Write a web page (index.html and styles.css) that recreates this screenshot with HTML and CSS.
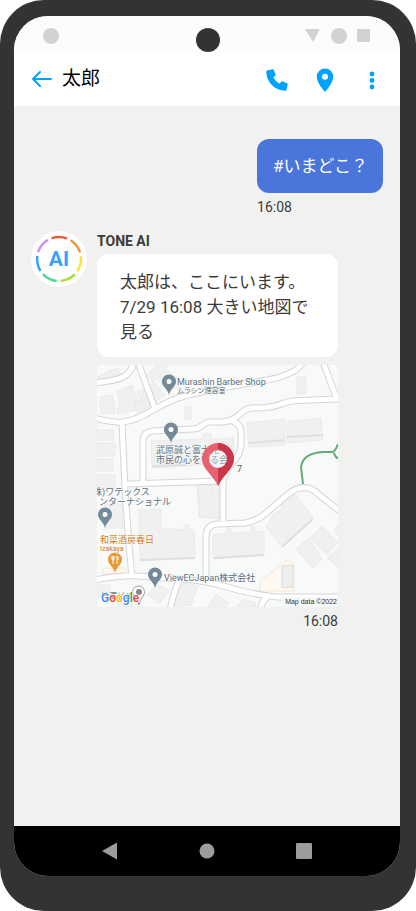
FILE: index.html
```html
<!DOCTYPE html>
<html lang="ja">
  <head>
    <meta charset="UTF-8" />
    <meta name="viewport" content="width=device-width, initial-scale=1.0" />
    <title>太郎</title>
    <link rel="stylesheet" href="styles.css">
  </head>
  <body>
    <div class="phone">
      <div class="camera"></div>
      <div class="screen">
        <div class="status-bar">
          <svg width="16" height="16" viewBox="0 0 16 16"><circle cx="8" cy="8" r="8" /></svg>
          <svg width="66" height="16" viewBox="0 0 66 16">
            <path d="M0 1h15L8 14z" />
            <circle cx="34" cy="8" r="8" />
            <path d="M52 1h13v13H52z" />
          </svg>
        </div>

        <header class="header">
          <button class="icon-button" aria-label="戻る">
            <svg width="22" height="18" viewBox="0 0 22 18">
              <path class="arrow" d="M20 9H2M9 2L2 9l7 7" />
            </svg>
          </button>
          <h1>太郎</h1>
          <div class="actions">
            <button class="icon-button" aria-label="電話">
              <svg width="22" height="22" viewBox="0 0 22 22">
                <path d="M1 1.5L6.5 0.3Q7.4 0.1 7.8 1L9.6 5.4Q9.9 6.2 9.2 6.8L7.3 8.5Q9.4 12.5 13.5 14.7L15.2 12.8Q15.8 12.1 16.6 12.4L21 14.2Q21.9 14.6 21.7 15.5L20.5 20.8Q20.3 21.7 19.4 21.7C9 21.7.3 13 .3 2.5Q.3 1.7 1 1.5z" />
              </svg>
            </button>
            <button class="icon-button" aria-label="現在地">
              <svg width="18" height="24" viewBox="0 0 18 24">
                <path fill-rule="evenodd" d="M9 0.5a8.3 8.3 0 0 0-8.3 8.3C.7 15 9 24 9 24s8.3-9 8.3-15.2A8.3 8.3 0 0 0 9 .5zM9 5.8a3 3 0 1 1 0 6 3 3 0 0 1 0-6z" />
              </svg>
            </button>
            <button class="icon-button" aria-label="メニュー">
              <svg width="6" height="20" viewBox="0 0 6 20">
                <circle cx="3" cy="4" r="2.4" /><circle cx="3" cy="10.5" r="2.4" /><circle cx="3" cy="17" r="2.4" />
              </svg>
            </button>
          </div>
        </header>

        <main class="chat">
          <div class="message sent">
            <p class="bubble">#いまどこ？</p>
            <time>16:08</time>
          </div>

          <div class="message received">
            <svg class="avatar" width="56" height="56" viewBox="0 0 56 56">
              <circle cx="28" cy="28" r="28" fill="#fff" />
              <g class="ring" transform="rotate(-110 28 28)">
                <circle cx="28" cy="28" r="22" pathLength="70" stroke="#ea5b40" />
                <circle cx="28" cy="28" r="22" pathLength="70" stroke="#f2933f" stroke-dashoffset="-10" />
                <circle cx="28" cy="28" r="22" pathLength="70" stroke="#f9e43b" stroke-dashoffset="-20" />
                <circle cx="28" cy="28" r="22" pathLength="70" stroke="#a5df35" stroke-dashoffset="-30" />
                <circle cx="28" cy="28" r="22" pathLength="70" stroke="#50d99b" stroke-dashoffset="-40" />
                <circle cx="28" cy="28" r="22" pathLength="70" stroke="#3ba2fa" stroke-dashoffset="-50" />
                <circle cx="28" cy="28" r="22" pathLength="70" stroke="#c794fa" stroke-dashoffset="-60" />
              </g>
              <text class="avatar-text" x="28" y="35">AI</text>
            </svg>
            <div class="content">
              <h2>TONE AI</h2>
              <p class="bubble">太郎は、ここにいます。<br>7/29 16:08 大きい地図で見る</p>
              <svg class="map" viewBox="0 0 241 242" role="img" aria-label="地図">
                <defs>
                  <g id="place">
                    <path d="M0 20C-1 14-7 12-7 6.5a7 7 0 0 1 14 0C7 12 1 14 0 20z" />
                    <circle cy="6.5" r="2.5" fill="#fff" />
                  </g>
                  <g id="roads">
                    <path d="M-3 53Q16 58 26 57Q38 56 58 44T100 28Q130 22 165 16T206-3" />
                    <path d="M-3 18Q18 16 26 12T37-3" />
                    <path d="M41-3L58 44" />
                    <path d="M25 57L28 125L32 180L35 212" />
                    <path d="M46 120V76Q46 67 56 66L96 64Q101 64 106 60T116 57H126Q136 56 143 49T158 43Q175 43 184 39T214 35L244 34" />
                    <path d="M30 119L124 116" />
                    <path d="M132 55Q144 58 144 67V80Q143 90 136 97T126 116V156" />
                    <path d="M226-3L240 34" />
                    <path d="M109 218V172Q109 160 120 159L148 158Q160 156 168 149L190 130Q204 118 216 125L244 147" />
                    <path d="M-3 215Q25 210 40 211T80 214Q108 215 130 222T180 232H244" />
                    <path d="M83 214Q77 225 73 245M170 232Q164 237 164 245" />
                  </g>
                </defs>
                <rect width="241" height="242" fill="#f8faf9" />

                <g class="buildings">
                  <path d="M1 12l8-4 3 9-8 4zM10 7l11-4 3 8-9 5zM50 10l12-13h10v3L56 17zM60 14l10-9 10 8-11 10zM49 23l8-6 11 13-9 7zM40 27l9-4 8 16-8 4zM20 26l15-6 8 21-20 3zM3 32l13-2 2 18-14 1z" />
                  <path d="M20 43l24-9 4 9-27 6zM38 36l17-2 3 8-18 6zM0 65h17v10H0zM0 78h18v13H0zM0 94h16v12H0zM0 110h18v14H0z" />
                  <path d="M88 42h6v12h-6zM54 76l52-2v-5h8v5l22-1 2 25-83 5zM200 12l9-1v17l-9 1zM150 58l38-4v3l36-4 2 22-36 3v-14l-3 1 1 15-36 2z" />
                  <path d="M8 139h18v24H8zM42 145l22-1v19l23 2v-5h5v5h5l1 27-55 4zM100 120l25-1v35l-23-2zM102 120h13v10h12v22h-25z" />
                  <path d="M116 170l14-2v-5h4v5l20-1v-5h4v5l9-1v24l-51 4z" />
                  <path d="M169 162l7-12 9-6-1-6 8-7 7-1 17 22-32 29zM199 184l12-11 14 21-9 9zM213 173l12-12 16 16-11 13zM237 165l4-4v9zM230 193l11-9v18z" />
                  <path d="M0 220h13v12H0zM21 234h15v8H21zM50 230l10-11 12 7-9 12zM77 230l10-12 14 3-7 19-18 2zM111 242l8-13 13 9-3 4zM139 242l8-8 12 4v4z" />
                </g>
                <g class="shadows">
                  <path d="M55 101l34-1M152 78l36-3M190 72l36-2M43 195l55-2M117 193l50-3M185 182l31-28" />
                </g>
                <path class="shop" d="M163 216l28-21 6 4v27h-34zM73 25l7-2 6 8-7 2zM6 209h22v-6H6z" />
                <path class="tower" d="M185 201l11-1v22l-11 1z" />

                <use href="#roads" class="road-edge" />
                <use href="#roads" class="road" />
                <path class="park" d="M206 119L204 102Q206 88 226 87H235Q238 87 241 79M237 88Q238 93 243 94" />

                <g fill="#758a98">
                  <use href="#place" x="72" y="10" />
                  <use href="#place" x="74" y="58" />
                  <use href="#place" x="8" y="143" />
                  <use href="#place" x="58" y="203" />
                  <use href="#place" x="18" y="188" fill="#e89a35" />
                </g>
                <circle cx="18" cy="195" r="4" fill="#e89a35" />
                <path class="fork" d="M15 191v3q0 1 1 1t1-1v-3M16 191v8M20 199v-8q2 1 1 4" />

                <g class="labels">
                  <text x="80" y="20">Murashin Barber Shop</text>
                  <text x="80" y="28" class="tiny">ムラシン理容室</text>
                  <text x="59" y="88">武原誠と富士見</text>
                  <text x="59" y="98">市民の心を守る会</text>
                  <text x="-4" y="130">株)ワテックス</text>
                  <text x="2" y="140">ンターナショナル</text>
                  <text x="67" y="216">ViewECJapan株式会社</text>
                  <text x="3" y="178" class="food">和菜酒房春日</text>
                  <text x="3" y="186" class="food tiny">Izakaya</text>
                  <text x="4" y="234" class="small">竹澤ビル</text>
                </g>

                <path d="M42 240Q41 234 37 231a6 6 0 1 1 9 0Q43 235 42 240z" fill="#fff" stroke="#9a9a9a" />
                <circle cx="42" cy="227" r="3" fill="#858585" />
                <text x="4" y="237" class="google"><tspan fill="#4285f4">G</tspan><tspan fill="#ea4335">o</tspan><tspan fill="#fbbc05">o</tspan><tspan fill="#4285f4">g</tspan><tspan fill="#34a853">l</tspan><tspan fill="#ea4335">e</tspan></text>

                <path fill="#e8616f" fill-rule="evenodd" d="M121 121C117 111 105 104 105 94a16 16 0 0 1 32 0C137 104 125 111 121 121zM121 85a9 9 0 1 0 0 18 9 9 0 0 0 0-18z" />
                <path fill="#c93549" d="M121 78a16 16 0 0 1 16 16C137 104 125 111 121 121V103a9 9 0 0 0 0-18z" />
                <circle cx="121" cy="94" r="9" fill="#fff" fill-opacity="0.3" />
                <text x="140" y="107" class="number">7</text>

                <rect x="185" y="232" width="56" height="10" fill="#f6f7f6" />
                <text x="240" y="239" class="credit">Map data ©2022</text>
              </svg>
              <time>16:08</time>
            </div>
          </div>
        </main>

        <nav class="nav-bar">
          <button class="icon-button" aria-label="Back">
            <svg width="18" height="18" viewBox="0 0 18 18"><path d="M1 9L16 .5v17z" stroke-linejoin="round" /></svg>
          </button>
          <button class="icon-button" aria-label="Home">
            <svg width="18" height="18" viewBox="0 0 18 18"><circle cx="9" cy="9" r="7.5" /></svg>
          </button>
          <button class="icon-button" aria-label="Recent">
            <svg width="18" height="18" viewBox="0 0 18 18"><rect x="1" y="1" width="16" height="16" rx="1" /></svg>
          </button>
        </nav>
      </div>
    </div>
  </body>
</html>
```

FILE: styles.css
```css
* {
  box-sizing: border-box;
}

body {
  margin: 0;
  background-color: #ffffff;
  font-family: Roboto, "Noto Sans CJK JP", sans-serif;
  color: #3b3b3b;
}

h1,
h2,
p {
  margin: 0;
}

.phone {
  position: relative;
  display: flex;
  min-height: 100vh;
  padding: 16px 16px 35px 14px;
  background-color: #333333;
  border-radius: 44px;
}

.camera {
  position: absolute;
  top: 28px;
  left: 50%;
  width: 24px;
  height: 24px;
  margin-left: -12px;
  background-color: #333333;
  border-radius: 50%;
}

.screen {
  flex: 1;
  display: flex;
  flex-direction: column;
  background-color: #f1f1ef;
  border-radius: 34px;
  overflow: hidden;
}

.status-bar {
  display: flex;
  justify-content: space-between;
  align-items: center;
  height: 35px;
  padding: 4px 29px 0;
  background-color: #fcfcfc;
  fill: #d2d2d2;
}

.header {
  display: flex;
  align-items: center;
  height: 55px;
  padding: 0 25px 0 17px;
  background-color: #ffffff;
}

.icon-button {
  display: flex;
  padding: 0;
  border: none;
  background: none;
  cursor: pointer;
}

.header svg {
  fill: #00a2ff;
}

.header .arrow {
  fill: none;
  stroke: #00a2ff;
  stroke-width: 2;
  stroke-linecap: round;
  stroke-linejoin: round;
}

h1 {
  margin-left: 9px;
  font-size: 19px;
  line-height: 28px;
  font-weight: 400;
  color: #000000;
}

.actions {
  display: flex;
  align-items: center;
  margin-left: auto;
  padding-top: 3px;
}

.actions .icon-button + .icon-button {
  margin-left: 28px;
}

.actions .icon-button:last-child {
  margin-left: 35px;
}

.chat {
  flex: 1;
  padding: 33px 17px 24px;
}

.message {
  display: flex;
}

.sent {
  flex-direction: column;
  align-items: flex-start;
  width: fit-content;
  margin-left: auto;
}

.bubble {
  border-radius: 12px;
  font-size: 17px;
  line-height: 25px;
}

.sent .bubble {
  padding: 15px 15px 14px 16px;
  background-color: #4a76dc;
  color: #ffffff;
}

time {
  font-size: 14px;
  line-height: 20px;
}

.sent time {
  margin-top: 4px;
}

.received {
  gap: 10px;
  margin-top: 14px;
}

.avatar {
  flex: none;
}

.ring {
  fill: none;
  stroke-width: 2.5;
  stroke-dasharray: 8 62;
}

.avatar-text {
  font-size: 21px;
  font-weight: 700;
  text-anchor: middle;
  fill: #3ba2fa;
}

.content {
  display: flex;
  flex-direction: column;
  flex: 0 1 241px;
}

h2 {
  font-size: 14px;
  line-height: 20px;
  font-weight: 700;
}

.received .bubble {
  margin-top: 3px;
  padding: 16px 23px 12px;
  background-color: #ffffff;
}

.map {
  display: block;
  width: 100%;
  margin-top: 8px;
  border-radius: 4px;
}

.content time {
  margin-top: 4px;
  align-self: flex-end;
}

.buildings {
  fill: #f0f0f0;
  stroke: #e9eaea;
  stroke-width: 1;
}

.shadows {
  fill: none;
  stroke: #dedfdf;
  stroke-width: 2;
}

.shop {
  fill: #fdf8f0;
  stroke: #f7e7d2;
}

.tower {
  fill: #eeeeee;
  stroke: #dddddd;
}

.road-edge {
  fill: none;
  stroke: #d3d5d8;
  stroke-width: 7;
}

.road {
  fill: none;
  stroke: #ffffff;
  stroke-width: 5;
}

.park {
  fill: none;
  stroke: #65ac78;
  stroke-width: 2;
}

.fork {
  fill: none;
  stroke: #ffffff;
}

.labels {
  font-size: 9px;
  fill: #5b7080;
  stroke: #f8faf9;
  stroke-width: 1;
  paint-order: stroke;
}

.labels .tiny {
  font-size: 7px;
}

.labels .small {
  font-size: 8px;
}

.labels .food {
  fill: #d27a25;
}

.google {
  font-size: 12px;
  font-weight: 500;
  stroke: #ffffff;
  stroke-width: 1;
  paint-order: stroke;
}

.number {
  font-size: 9px;
  fill: #4d5962;
}

.credit {
  font-family: "Liberation Sans", sans-serif;
  font-size: 7px;
  text-anchor: end;
  fill: #333333;
}

.nav-bar {
  display: flex;
  justify-content: center;
  align-items: center;
  gap: 79px;
  height: 50px;
  background-color: #000000;
}

.nav-bar svg {
  fill: #9c9c9c;
}
```
